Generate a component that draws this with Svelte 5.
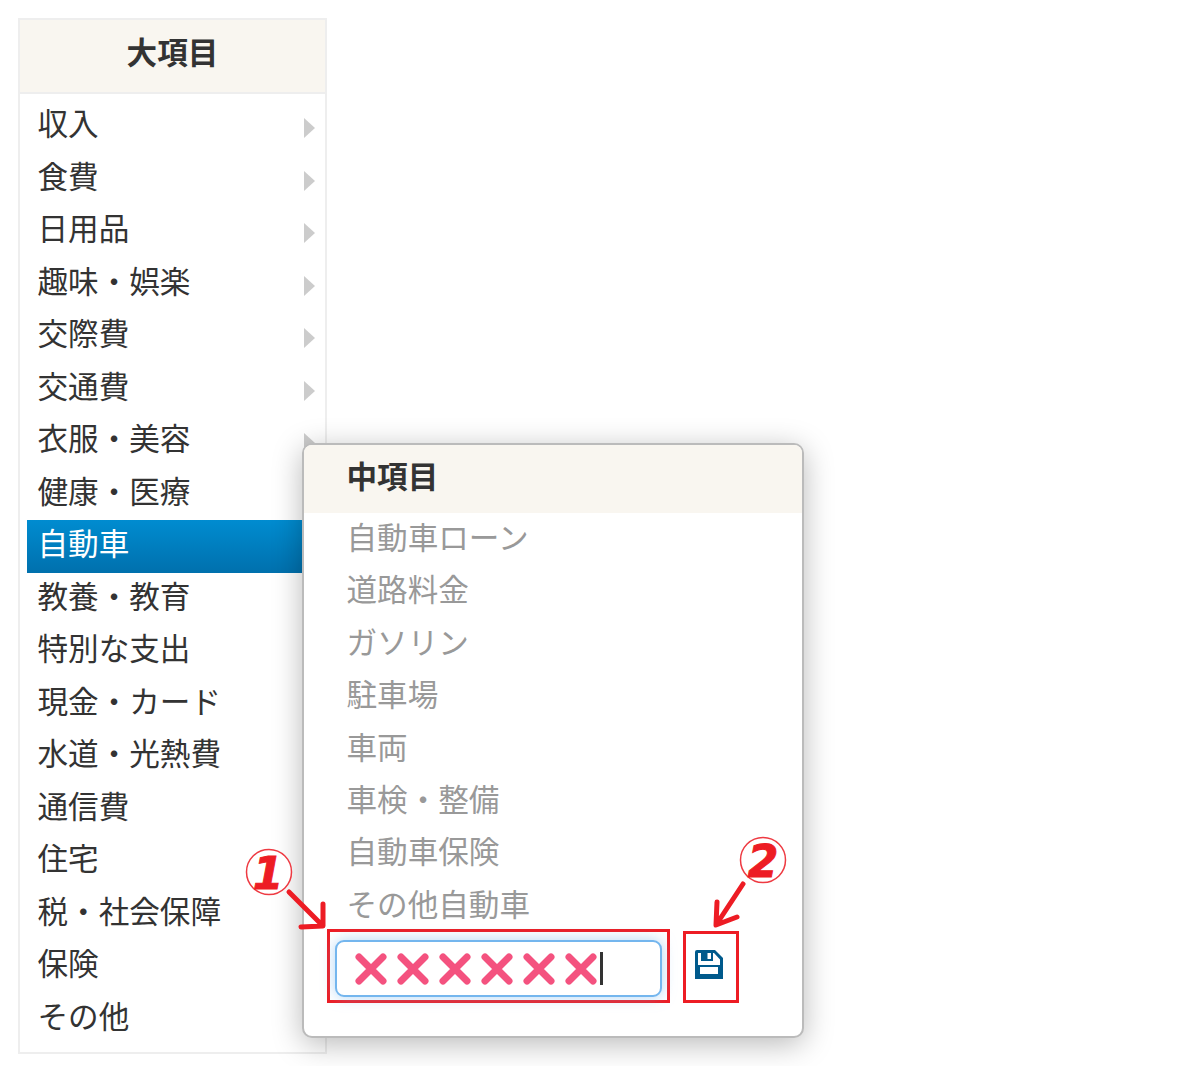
<script>
  // category picker: main list on the left, sub list popover with the new-item input
  const groups = [
    '収入', '食費', '日用品', '趣味・娯楽', '交際費', '交通費', '衣服・美容', '健康・医療', '自動車',
    '教養・教育', '特別な支出', '現金・カード', '水道・光熱費', '通信費', '住宅', '税・社会保障', '保険', 'その他'
  ];
  const subs = ['自動車ローン', '道路料金', 'ガソリン', '駐車場', '車両', '車検・整備', '自動車保険', 'その他自動車'];
  const active = '自動車';
  const marks = [0, 1, 2, 3, 4, 5];
</script>

<div class="page">
  <div class="panel">
    <div class="panel-head">大項目</div>
    <ul class="groups">
      {#each groups as g}
        <li class="group" class:on={g === active}>{g}<span class="tri"></span></li>
      {/each}
    </ul>
  </div>

  <div class="pop">
    <div class="pop-head">中項目</div>
    <ul class="subs">
      {#each subs as s}
        <li>{s}</li>
      {/each}
    </ul>
    <div class="add">
      <div class="hl">
        <div class="input">
          {#each marks as m (m)}
            <svg class="x" viewBox="0 0 32 32" width="32" height="32">
              <path d="M4 4 L28 28 M28 4 L4 28" stroke="#f4527f" stroke-width="7" stroke-linecap="round" />
            </svg>
          {/each}
          <span class="caret"></span>
        </div>
      </div>
      <div class="hl save">
        <svg viewBox="0 0 28 29" width="28" height="29">
          <path fill="#005a8c" fill-rule="evenodd" d="M0 2 Q0 0 2 0 H20 L28 8 V29 H0 Z M3 3 V15 H25 V9.5 L19 3 H18 V11 H6 V3 Z M5 17 V24 H23 V17 Z" />
          <rect x="12.5" y="3" width="3.5" height="6" fill="#fff" />
        </svg>
      </div>
    </div>
  </div>

  <!-- hand-drawn annotations over the screenshot -->
  <svg class="notes" viewBox="0 0 1200 1066" width="1200" height="1066">
    <circle cx="269" cy="872" r="22.5" fill="#fff" stroke="#ee3a42" stroke-width="1.5" />
    <text x="268" y="889" class="num">1</text>
    <path d="M289 892 L322 925 M323 904 L323 926 L301 927" />
    <circle cx="763" cy="860" r="22.5" fill="#fff" stroke="#ee3a42" stroke-width="1.5" />
    <text x="763" y="877" class="num">2</text>
    <path d="M743 884 L718 922 M717 902 L716 925 L737 917" />
  </svg>
</div>

<style>
  :global(body) { margin: 0; background: #fff; }
  .page {
    position: relative; width: 1200px; height: 1066px; padding: 18px; box-sizing: border-box; overflow: hidden;
    font-family: "Noto Sans CJK JP", "Liberation Sans", sans-serif; font-size: 30.6px; color: #333;
  }
  ul { list-style: none; margin: 0; padding: 0; }

  .panel { width: 309px; height: 1036px; box-sizing: border-box; border: 2px solid #eee; background: #fff; }
  .panel-head {
    height: 72px; line-height: 63px; text-align: center; font-weight: 700; background: #f9f6f0;
    border-bottom: 2px solid #eee;
  }
  .groups { padding: 6px 7px; }
  .group { height: 52.5px; line-height: 44px; padding-left: 10.5px; position: relative; }
  .group.on { background: linear-gradient(#008cd0, #0070ad); color: #fff; }
  .tri {
    position: absolute; right: 3px; top: 18px; width: 0; height: 0;
    border-left: 11px solid #ccc; border-top: 10px solid transparent; border-bottom: 10px solid transparent;
  }

  .pop {
    position: absolute; left: 302px; top: 443px; width: 502px; height: 595px; box-sizing: border-box;
    border: 2px solid #bbb; border-radius: 10px; background: #fff; overflow: visible;
    box-shadow: 0 6px 30px rgba(0, 0, 0, 0.28);
  }
  .pop-head {
    height: 68px; line-height: 60px; padding-left: 42.5px; font-weight: 700; background: #f9f6f0;
    border-radius: 8px 8px 0 0;
  }
  .subs li { height: 52.4px; line-height: 48px; padding-left: 42.5px; color: #999; }
  .subs { margin-top: -1px; }

  .add { display: flex; align-items: flex-end; gap: 13px; padding-left: 23px; margin-top: -2px; }
  .hl { border: 3px solid #ed1c24; box-sizing: border-box; }
  .hl:first-child { width: 343px; height: 74px; padding: 8px 5px 3px; }
  .input {
    display: flex; align-items: center; height: 57px; box-sizing: border-box; padding-left: 18px; gap: 10px;
    border: 2px solid #74b6ee; border-radius: 9px; background: #fff;
    box-shadow: 0 0 14px rgba(116, 182, 238, 0.55);
  }
  .x { flex: none; }
  .caret { width: 3px; height: 33px; background: #333; margin-left: -7px; }
  .save { width: 56px; height: 72px; padding: 16px 9px 0; }
  .save svg { display: block; }

  .notes { position: absolute; left: 0; top: 0; pointer-events: none; }
  .notes path { fill: none; stroke: #ed1c24; stroke-width: 5; stroke-linecap: round; stroke-linejoin: round; }
  .num {
    font-family: "DejaVu Sans", sans-serif; font-size: 44px; font-weight: 700; font-style: italic;
    fill: #ed1c24; stroke: #ed1c24; stroke-width: 1; text-anchor: middle;
  }
</style>
